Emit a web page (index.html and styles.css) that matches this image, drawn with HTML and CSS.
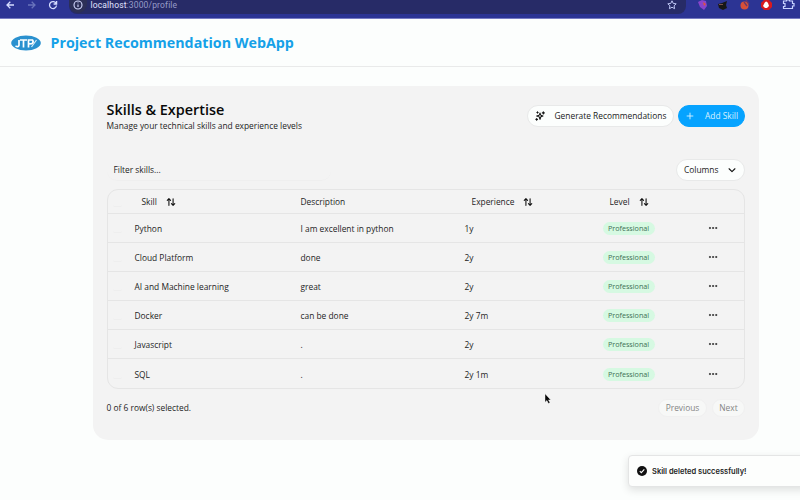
FILE: index.html
```html
<!DOCTYPE html>
<html lang="en">
<head>
<meta charset="utf-8">
<title>Project Recommendation WebApp</title>
<link rel="stylesheet" href="styles.css">
</head>
<body>
<svg class="defs" aria-hidden="true">
  <symbol id="sort" viewBox="0 0 24 24"><path d="m21 16-4 4-4-4M17 20V4M3 8l4-4 4 4M7 4v16"/></symbol>
  <symbol id="dots" viewBox="0 0 24 24"><circle cx="4.5" cy="12" r="1.6"/><circle cx="12" cy="12" r="1.6"/><circle cx="19.5" cy="12" r="1.6"/></symbol>
</svg>
<div class="browser">
  <svg class="nav" viewBox="0 0 64 18"><path class="on" d="M14 5H7M10.3 1.7 7 5l3.3 3.3"/><path class="off" d="M28 5h7M31.700 1.700 35 5l-3.300 3.300"/><path class="on" d="M56.200 3.600A3.500 3.500 0 1 0 56.500 5.500M56.600 1v3h-3"/></svg>
  <div class="address">
    <span class="info"><svg viewBox="0 0 12 12"><circle cx="6" cy="6" r="4"/><path d="M6 5.500v2.500M6 3.600v.7"/></svg></span>
    <span class="url"><b>localhost</b>:3000/profile</span>
    <svg class="star" viewBox="0 0 12 12"><path d="m6 1.800 1.250 2.650 2.950.35-2.150 2 .55 2.900L6 8.250 3.400 9.700l.55-2.900-2.150-2 2.950-.35z"/></svg>
  </div>
  <svg class="extensions" viewBox="0 0 114 18"><path fill="#8844cc" d="M12 2l4-2 4 1 1 5-3 4-4-3z"/><path fill="#e0523d" d="m17 2 3 2-2 2z"/><path fill="#171717" d="m32 4 4-1 5-2-1 4 1 3-4 2-4-2z"/><path fill="#7a5148" d="M33 4h4v1h-4z"/><circle cx="58.500" cy="5.500" r="4" fill="#d65038"/><path d="m58 2 3 4m-1-6 3 4" stroke="#6a3968" stroke-width="1.300"/><path fill="#d7191f" d="M78 0h5l3 3v4l-3 3h-5l-3-3V3z"/><path fill="#fff" d="M78.500 3q1.500-3 3.500 0l1 3-2 2h-2l-2-2z"/><path d="M97.500 1h3V0h3v1h3v2.500h1.500V6h-1.500v2.500h-9V6.500h1.500v-3h-1.500z" fill="none" stroke="#c7d2ff" stroke-width="1.200"/></svg>
</div>
<header class="site-header">
  <svg class="logo" viewBox="0 0 30 16"><ellipse cx="15" cy="8" rx="14.800" ry="7.400" fill="#2a91cf"/><path d="M4.500 11q3 1.500 3.500-.8V5M9 5h7M12.500 5v7.500M17.500 12.500V5h4q1.500 2-.5 3.600l-3.500.4" fill="none" stroke="#fff" stroke-width="1.700"/><path d="m20.500 12 5-7" stroke="#d9eef8" stroke-width="1.200"/></svg>
  <h1>Project Recommendation WebApp</h1>
</header>
<main class="card">
  <div class="card-head">
    <div><h2>Skills &amp; Expertise</h2><p>Manage your technical skills and experience levels</p></div>
    <div class="actions">
      <button class="btn generate"><svg class="icon" viewBox="0 0 24 24"><path d="m12 5 2 5 5 2-5 2-2 6-2-6-6-2 6-2zM20 2v5M17.500 4.500h5M6 2v3M4.500 3.500h3M4 18v4M2 20h4"/></svg><span>Generate Recommendations</span></button>
      <button class="btn add"><svg class="icon" viewBox="0 0 24 24"><path d="M5 12h14M12 5v14"/></svg><span>Add Skill</span></button>
    </div>
  </div>
  <div class="filters"><div class="filter">Filter skills...</div><button class="btn columns"><span>Columns</span><svg class="icon" viewBox="0 0 24 24"><path d="m5 9 7 7 7-7"/></svg></button></div>
  <div class="table">
    <div class="row head"><span><i class="check"></i></span><span class="sortable">Skill <svg class="icon"><use href="#sort"/></svg></span><span>Description</span><span class="sortable">Experience <svg class="icon"><use href="#sort"/></svg></span><span class="sortable">Level <svg class="icon"><use href="#sort"/></svg></span><span></span></div>
    <div class="row"><span><i class="check"></i></span><span>Python</span><span>I am excellent in python</span><span>1y</span><span><em>Professional</em></span><svg class="icon"><use href="#dots"/></svg></div>
    <div class="row"><span><i class="check"></i></span><span>Cloud Platform</span><span>done</span><span>2y</span><span><em>Professional</em></span><svg class="icon"><use href="#dots"/></svg></div>
    <div class="row"><span><i class="check"></i></span><span>AI and Machine learning</span><span>great</span><span>2y</span><span><em>Professional</em></span><svg class="icon"><use href="#dots"/></svg></div>
    <div class="row"><span><i class="check"></i></span><span>Docker</span><span>can be done</span><span>2y 7m</span><span><em>Professional</em></span><svg class="icon"><use href="#dots"/></svg></div>
    <div class="row"><span><i class="check"></i></span><span>Javascript</span><span>.</span><span>2y</span><span><em>Professional</em></span><svg class="icon"><use href="#dots"/></svg></div>
    <div class="row"><span><i class="check"></i></span><span>SQL</span><span>.</span><span>2y 1m</span><span><em>Professional</em></span><svg class="icon"><use href="#dots"/></svg></div>
  </div>
  <div class="pager"><span>0 of 6 row(s) selected.</span><div><button class="btn prev">Previous</button><button class="btn next">Next</button></div></div>
</main>
<div class="toast"><svg viewBox="0 0 12 12"><circle cx="6" cy="6" r="5"/><path d="m3.800 6.100 1.500 1.500 3-3.200"/></svg><span>Skill deleted successfully!</span></div>
<svg class="cursor" viewBox="0 0 8 12"><path d="M1 .8v8.400l1.900-1.700 1.500 3 1.600-.8-1.500-2.800h2.300z"/></svg>
</body>
</html>
```
FILE: styles.css
```css
* { box-sizing: border-box; }
body { margin: 0; width: 800px; height: 500px; overflow: hidden; background: #fcfefd; color: #242424; font: 8.38px/12px "Open Sans", sans-serif; }
h1, h2, p { margin: 0; }
.defs { position: absolute; width: 0; height: 0; }
.icon { width: 10px; height: 10px; flex: none; fill: none; stroke: #111; stroke-width: 2.6; stroke-linecap: round; stroke-linejoin: round; }

.browser { height: 19px; display: flex; background: #2c3494; border-bottom: 1px solid #777bc2; }
.nav { width: 64px; height: 18px; fill: none; stroke-width: 1.3; }
.nav .on { stroke: #d5dcff; }
.nav .off { stroke: #6873bb; }
.address { width: 617px; height: 14px; margin-left: 5px; display: flex; background: #272b67; border-radius: 0 0 8px 8px; font: 8.5px/10px Roboto, sans-serif; color: #979bc9; }
.info { width: 18px; height: 13px; padding-left: 3px; background: #2d3057; border-radius: 0 0 9px 9px; }
.info svg { display: block; width: 12px; height: 12px; margin-top: -1px; fill: none; stroke: #d5daff; stroke-width: 1.1; }
.url { margin-left: 3.5px; letter-spacing: .15px; }
.url b { font-weight: 400; color: #e1e4ff; }
.star { width: 12px; height: 12px; margin: -1px 8px 0 auto; fill: none; stroke: #bec6f4; stroke-width: 1; }
.extensions { width: 114px; height: 18px; flex: none; }

.site-header { height: 48px; display: flex; align-items: center; padding-left: 11px; border-bottom: 1px solid #e9eaea; }
.logo { width: 30px; height: 16px; }
h1 { margin-left: 9.5px; font-size: 14.27px; line-height: 20px; font-weight: 700; color: #15a1e8; white-space: nowrap; }

.card { width: 666px; height: 354px; margin: 19px 0 0 93px; padding: 14px 14px 0 13.500px; border-radius: 15px; background: #f3f3f3; }
.card-head { height: 59px; display: flex; justify-content: space-between; }
h2 { margin-top: 1px; font-size: 14.4px; line-height: 18px; font-weight: 600; color: #080808; }
p { padding-top: 1px; line-height: 12px; white-space: nowrap; }
.actions { display: flex; gap: 4px; padding-top: 5px; }
.btn { display: flex; align-items: center; height: 22px; padding: 0; border: 1px solid #e8e9e9; border-radius: 12px; background: #fcfefd; color: #202020; font: inherit; white-space: nowrap; }
.generate { width: 147px; padding-left: 7px; gap: 9.5px; }
.add { width: 67px; padding-left: 6px; gap: 10px; background: #06a3ff; border-color: #06a3ff; color: #d9f1ff; }
.add .icon { stroke: #d9f1ff; stroke-width: 2.2; }
.filters { height: 30px; display: flex; justify-content: space-between; }
.filter { width: 224px; height: 22px; padding: 5px 7px; border-bottom: 1px solid #efefef; border-radius: 10px; }
.columns { width: 69px; padding: 0 7px; justify-content: space-between; }

.table { height: 200px; border: 1px solid #e5e5e5; border-radius: 11px; }
.row { height: 29.100px; padding-top: 1px; display: grid; grid-template-columns: 27px 166px 164px 138px 97px 30px; align-items: center; border-bottom: 1px solid #e5e5e5; white-space: nowrap; }
.row:last-child { border: 0; }
.head { height: 24px; }
.row > .icon { margin: -1px 0 0 8px; fill: #111; stroke-width: 1; }
.sortable { display: flex; align-items: center; gap: 9px; padding-left: 7px; }
.check { display: block; width: 9px; height: 9px; margin-left: 5px; border-bottom: 1px solid #eeeeee; border-radius: 2px; }
em { display: block; width: 52px; height: 13px; margin-top: -1px; border-radius: 7px; background: #d6f9e2; color: #3d7055; font-size: 7.2px; line-height: 13px; font-style: normal; text-align: center; }
.pager { display: flex; justify-content: space-between; align-items: center; height: 38px; }
.pager div { display: flex; gap: 5px; }
.pager .btn { height: 18px; justify-content: center; color: #858585; background: #f7f8f7; border-color: #f0f0f0; }
.prev { width: 49px; }
.next { width: 33px; }

.toast { position: absolute; left: 628px; top: 455px; width: 180px; height: 32px; display: flex; align-items: center; gap: 4px; padding-left: 7px; background: #fdfefd; border: 1px solid #e4e5e5; border-radius: 4px; box-shadow: 0 3px 8px rgba(0,0,0,.12); font: 600 7.5px/12px Inter, sans-serif; }
.toast span { padding-top: 1px; }
.toast svg { width: 12px; height: 12px; fill: #111; }
.toast svg path { fill: none; stroke: #fff; stroke-width: 1.1; }
.cursor { position: absolute; left: 544px; top: 393px; width: 8px; height: 12px; fill: #080808; stroke: #fff; stroke-width: .4; }
```
